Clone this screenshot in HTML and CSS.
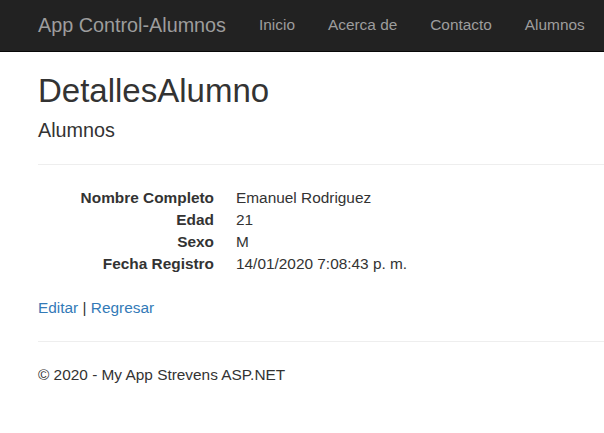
FILE: index.html
```html
<!DOCTYPE html>
<html>
<head>
<meta charset="utf-8">
<link rel="stylesheet" href="styles.css">
</head>
<body>
<nav class="navbar">
  <div class="nav-inner">
    <a class="brand" href="#">App Control-Alumnos</a>
    <ul class="nav-links">
      <li><a href="#">Inicio</a></li>
      <li><a href="#">Acerca de</a></li>
      <li><a href="#">Contacto</a></li>
      <li><a href="#">Alumnos</a></li>
    </ul>
  </div>
</nav>
<main class="content">
  <h2 class="title">DetallesAlumno</h2>
  <h4 class="subtitle">Alumnos</h4>
  <hr class="rule">
  <dl class="details">
    <dt>Nombre Completo</dt><dd>Emanuel Rodriguez</dd>
    <dt>Edad</dt><dd>21</dd>
    <dt>Sexo</dt><dd>M</dd>
    <dt>Fecha Registro</dt><dd>14/01/2020 7:08:43 p. m.</dd>
  </dl>
  <p class="actions"><a href="#">Editar</a> | <a href="#">Regresar</a></p>
  <hr class="rule">
  <footer class="footer">
    <p>&copy; 2020 - My App Strevens ASP.NET</p>
  </footer>
</main>
</body>
</html>
```
FILE: styles.css
```css
* { box-sizing: border-box; }
html, body { margin: 0; padding: 0; }
body {
  font-family: "Liberation Sans", Arial, sans-serif;
  font-size: 15.4px;
  line-height: 22px;
  color: #333;
  background: #fff;
}
a { text-decoration: none; }
.navbar {
  background: #222;
  border-bottom: 1px solid #080808;
  height: 52px;
}
.nav-inner {
  display: flex;
  align-items: center;
  height: 51px;
  padding: 0 0 2px 21.5px;
}
.brand {
  color: #9d9d9d;
  font-size: 19.8px;
  line-height: 22px;
  padding: 0 16.5px;
}
.nav-links {
  display: flex;
  list-style: none;
  margin: 0;
  padding: 0;
}
.nav-links a {
  display: block;
  color: #9d9d9d;
  font-size: 15.4px;
  line-height: 22px;
  padding: 0 16.5px;
}
.content {
  padding-left: 38px;
}
.title {
  font-size: 33px;
  font-weight: 500;
  line-height: 36.3px;
  margin: 21px 0 11px;
}
.subtitle {
  font-size: 19.8px;
  font-weight: 500;
  line-height: 21.8px;
  margin: 11px 0 0;
}
.rule {
  border: 0;
  border-top: 1px solid #eee;
  margin: 22px 0;
}
.details {
  display: grid;
  grid-template-columns: 176px 1fr;
  column-gap: 22px;
  margin: 0 0 22px;
}
.details dt {
  font-weight: bold;
  text-align: right;
}
.details dd { margin: 0; }
.actions { margin: 0 0 11px; }
.actions a { color: #337ab7; }
.footer p { margin: 0; }
```
